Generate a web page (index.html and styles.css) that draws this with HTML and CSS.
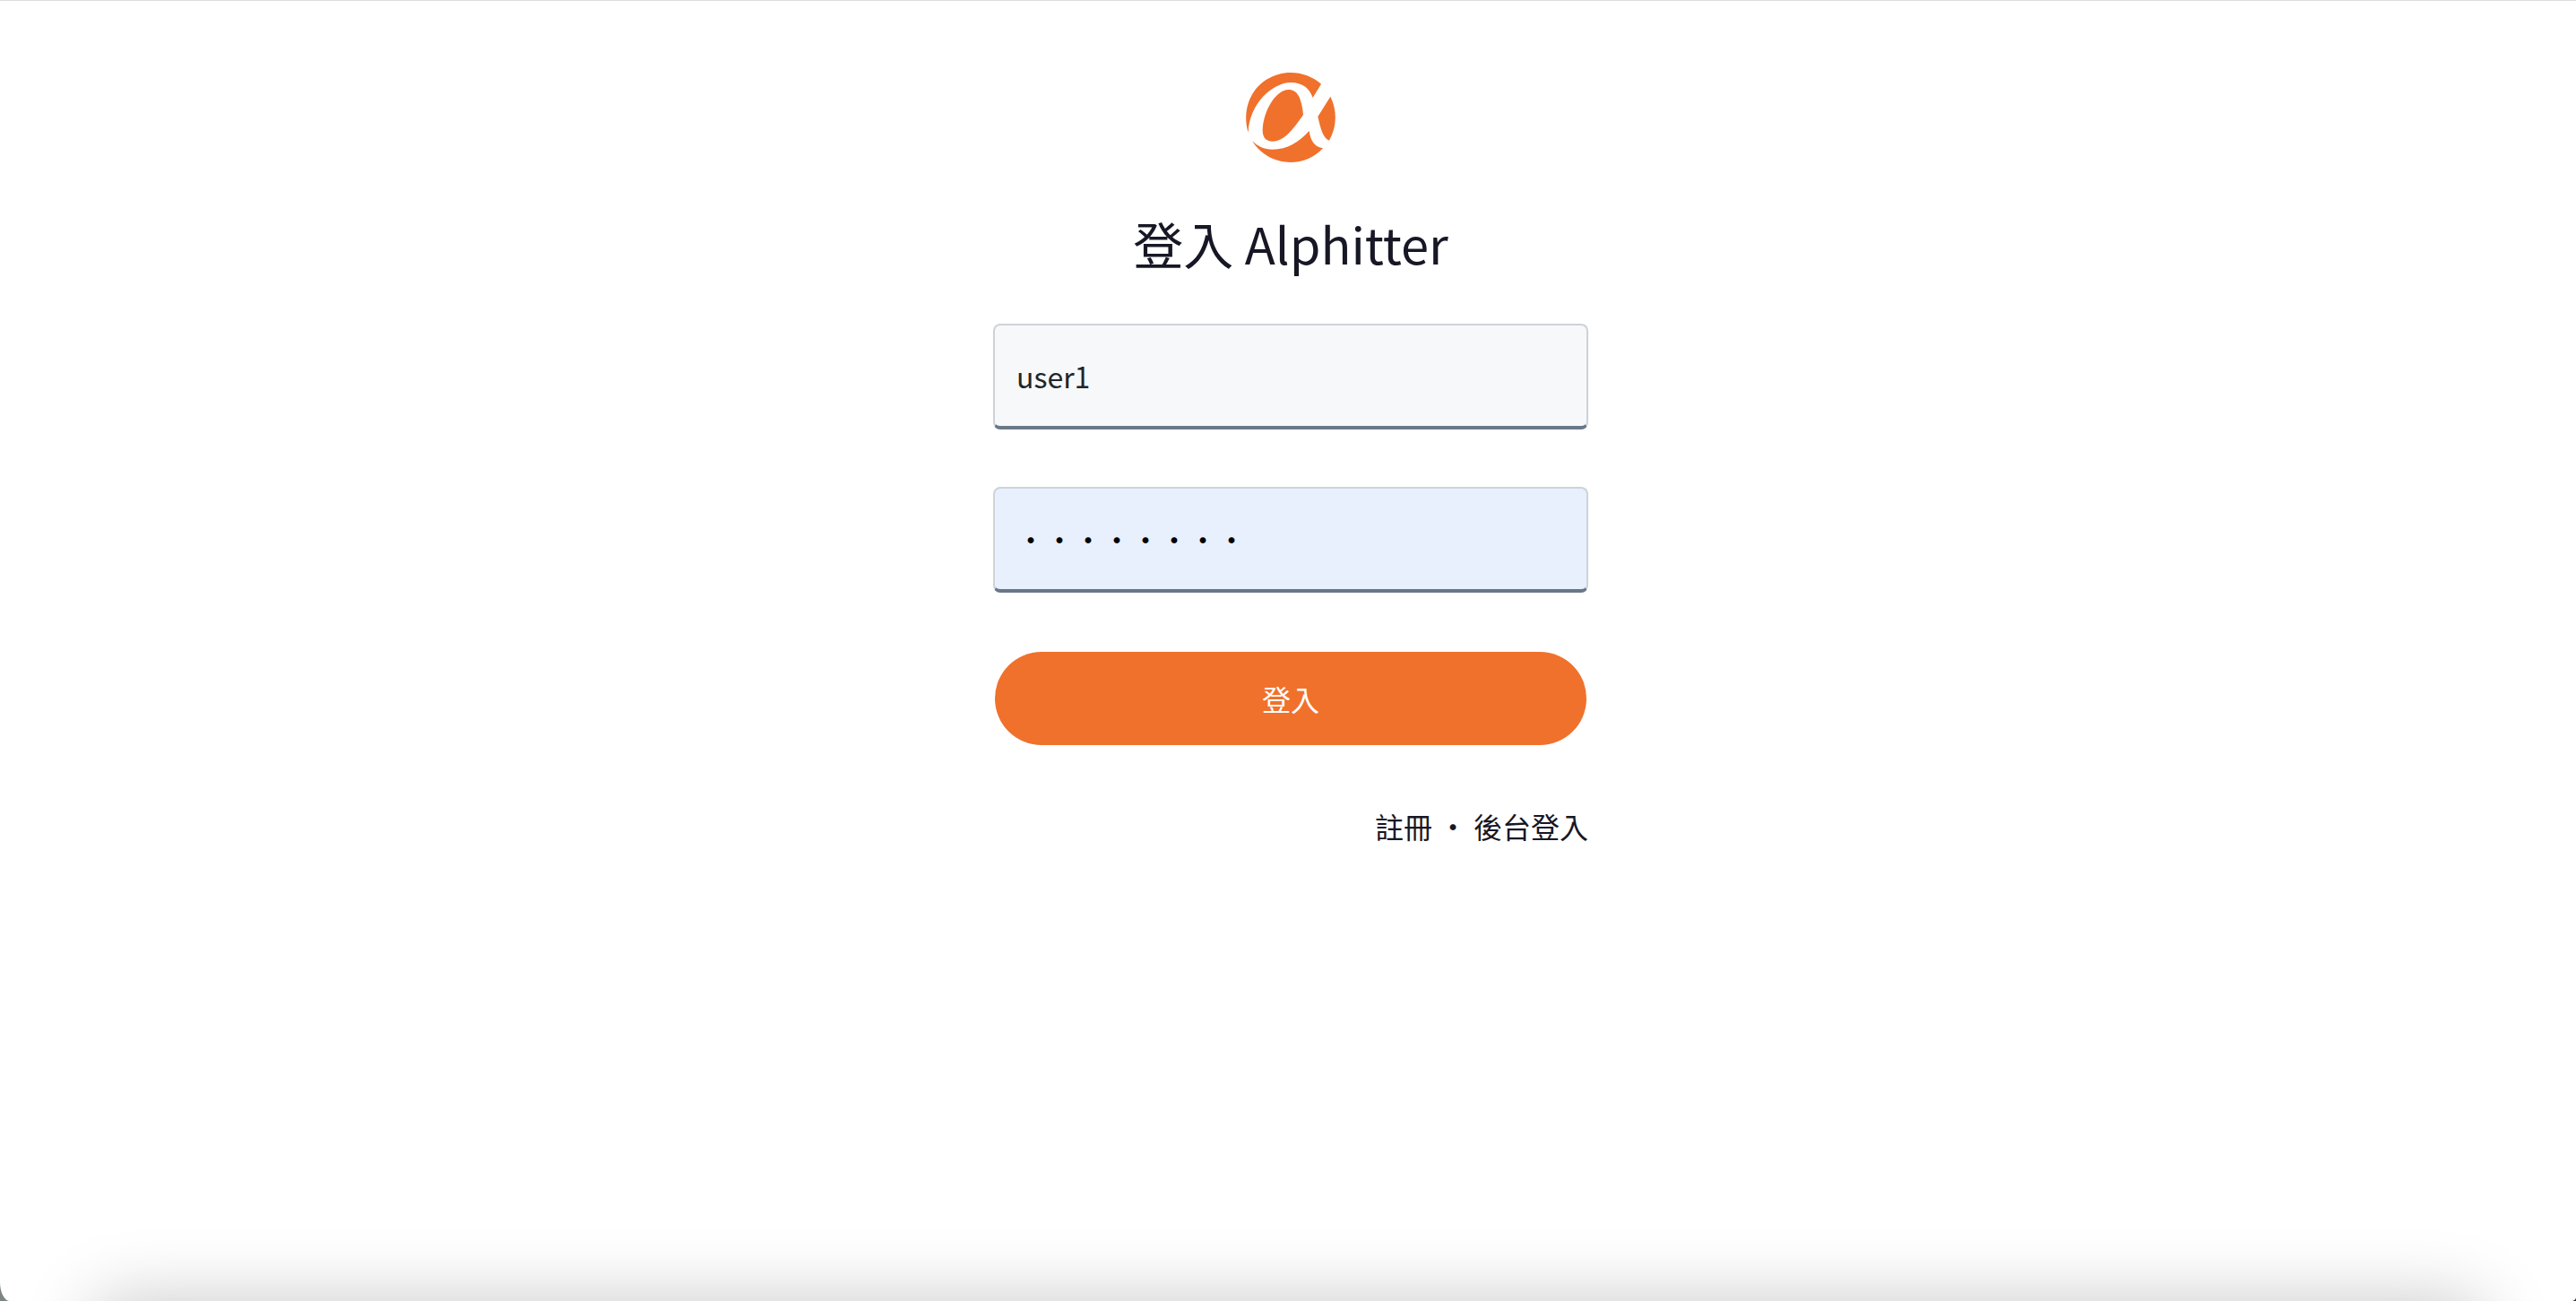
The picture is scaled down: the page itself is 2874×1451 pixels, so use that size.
FILE: index.html
```html
<!DOCTYPE html>
<html lang="zh-Hant">
<head>
<meta charset="utf-8">
<meta name="viewport" content="width=device-width, initial-scale=1">
<title>登入 Alphitter</title>
<link rel="stylesheet" href="styles.css">
</head>
<body>
<main class="page">
  <form class="login">
    <svg class="logo" viewBox="0 0 300 300" aria-hidden="true">
      <path class="logo-mark" d="M224 84C213 53 190 33 150 33C90 33 11 104 8 200C-4 166 -2 115 18 79C42 32 93 0 150 0C189 0 224 14 252 38Z"/>
      <path class="logo-mark" d="M143 57C172 57 186 83 192 141C160 188 127 230 90 230C66 230 55 216 56 189C59 126 101 57 143 57Z"/>
      <path class="logo-mark" d="M283 80C307 129 304 182 279 227C259 220 250 189 241 147Z"/>
      <path class="logo-mark" d="M22 229C39 247 61 257 89 257C140 257 177 233 212 195C216 228 230 249 258 253C229 284 192 300 150 300C96 300 47 272 22 229Z"/>
    </svg>
    <h1 class="title">登入 Alphitter</h1>
    <input class="field" type="text" name="account" value="user1" aria-label="帳號">
    <input class="field field-filled" type="password" name="password" value="12345678" aria-label="密碼">
    <button class="submit" type="submit">登入</button>
    <nav class="links">
      <a href="#register">註冊</a>
      <span>・</span>
      <a href="#admin">後台登入</a>
    </nav>
  </form>
</main>
</body>
</html>
```

FILE: styles.css
```css
* {
  box-sizing: border-box;
}

html {
  background: linear-gradient(90deg, #7d8583 50%, #333 50%);
}

body {
  margin: 0;
  color: #171725;
  font-family: "Noto Sans CJK TC", sans-serif;
  font-size: 32px;
  line-height: 48px;
}

.page {
  position: relative;
  display: flex;
  justify-content: center;
  min-height: 100vh;
  padding: 80px 0 80px 6px;
  overflow: hidden;
  background: #fff;
  border-top: 1px solid #dcdcdc;
  border-radius: 0 0 5px 11px / 0 0 4px 21px;
}

/* Soft shade rising from the lower edge of the window */
.page::after {
  content: "";
  position: absolute;
  top: 100%;
  left: 104px;
  right: 104px;
  height: 200px;
  border-radius: 20px;
  box-shadow: 0 0 80px rgba(0, 0, 0, 0.22);
  pointer-events: none;
}

.login {
  display: flex;
  flex-direction: column;
  width: 100%;
  max-width: 664px;
}

.logo {
  align-self: center;
  width: 100px;
  height: 100px;
}

.logo-mark {
  fill: #f0712c;
}

.title {
  margin: 50px 0;
  font-size: 56px;
  font-weight: 400;
  line-height: 80px;
  text-align: center;
}

.field {
  width: 100%;
  height: 118px;
  margin: 0 0 64px;
  padding: 0 24px;
  color: #212529;
  font: inherit;
  background: #f7f8fa;
  border: 2px solid #ccd3d9;
  border-bottom: 4px solid #697788;
  border-radius: 8px;
  outline: 0;
}

.field-filled {
  color: #000;
  background: #e8effd;
}

.submit {
  height: 104px;
  margin: 2px 2px 66px;
  padding: 0;
  color: #fff;
  font: inherit;
  background: #f0712c;
  border: 0;
  border-radius: 52px;
}

.links {
  display: flex;
  justify-content: flex-end;
  gap: 7px;
}

.links a {
  color: inherit;
  text-decoration: none;
}
```
